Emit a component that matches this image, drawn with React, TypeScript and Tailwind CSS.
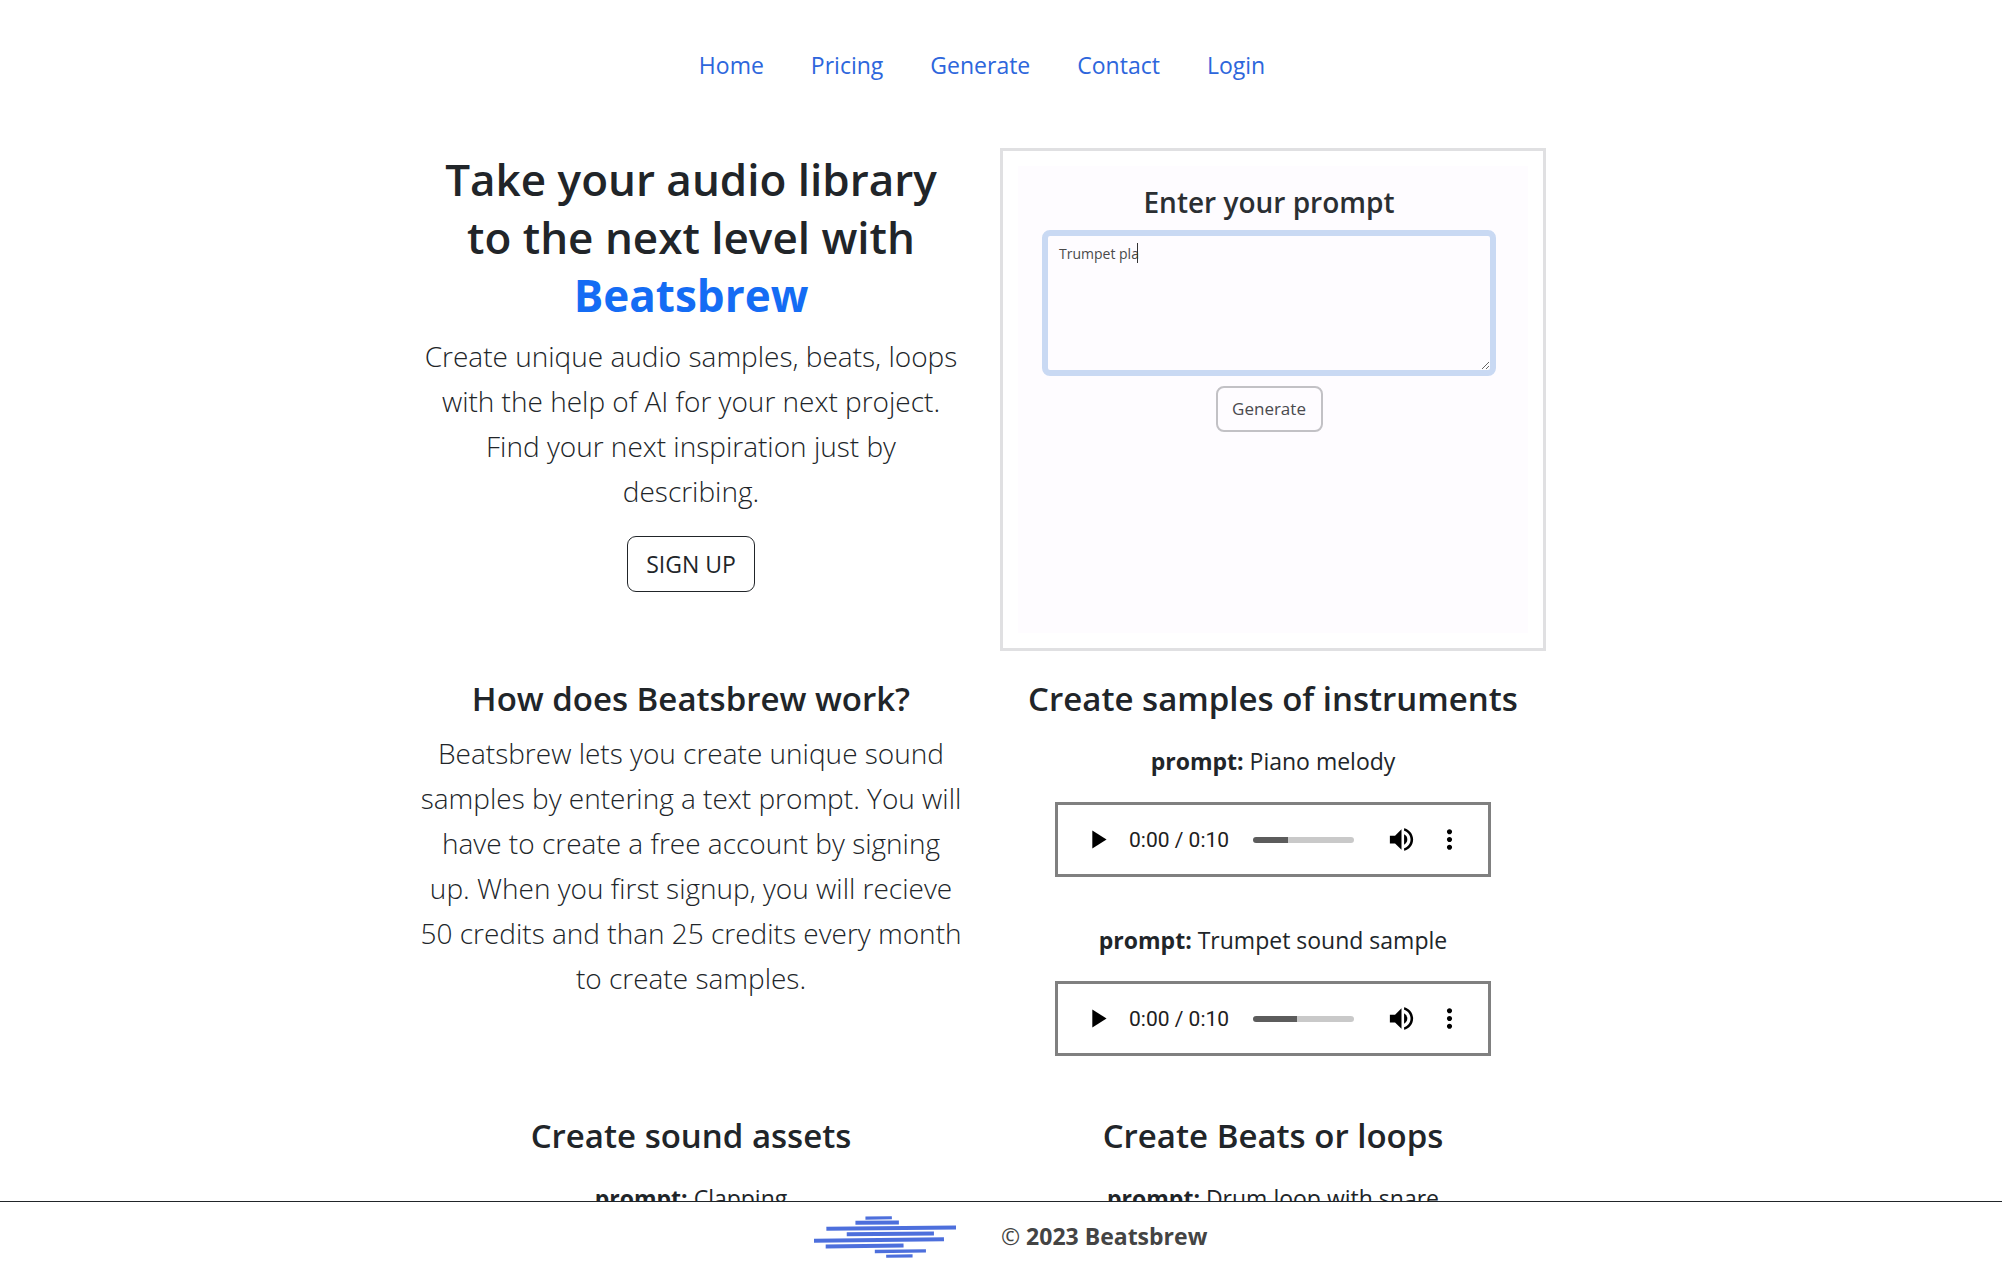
import type { CSSProperties, ReactNode } from "react"

const NAV_LINKS = ["Home", "Pricing", "Generate", "Contact", "Login"]

function Logo() {
  return (
    <svg
      viewBox="43 65 425 125"
      className="h-[42px] w-[142px]"
      stroke="#4d6fdc"
      strokeWidth="12"
      aria-label="Beatsbrew logo"
    >
      <path d="M197 71L276 70" strokeWidth="9" />
      <path d="M167 85L297 84" />
      <path d="M80 103L468 99" />
      <path d="M141 119L402 117" />
      <path d="M43 139L432 134" />
      <path d="M78 156L311 153" />
      <path d="M225 171L378 169" strokeWidth="10" />
      <path d="M259 185L338 184" strokeWidth="9" />
    </svg>
  )
}

function IconButton({ label, path }: { label: string; path: string }) {
  return (
    <button type="button" aria-label={label} className="shrink-0">
      <svg viewBox="0 0 24 24" className="size-[31px] fill-black">
        <path d={path} />
      </svg>
    </button>
  )
}

function AudioPlayer({ name, progress }: { name: string; progress: number }) {
  const track: CSSProperties = {
    background: `linear-gradient(to right, #5c5c5c ${progress}%, #c9c9c9 ${progress}%)`,
  }
  return (
    <div className="flex h-[75px] w-[436px] max-w-full items-center border-3 border-[#808080] pr-[23px] pl-6">
      <IconButton label={`Play ${name}`} path="M8 5v14l11-7z" />
      <span className="ml-4 w-[100px] font-[Roboto,sans-serif] text-[21px] leading-6 whitespace-nowrap text-[#202020]">
        0:00 / 0:10
      </span>
      <input
        type="range"
        aria-label={`Position in ${name}`}
        defaultValue={progress}
        style={track}
        className="ml-6 h-1.5 w-[101px] appearance-none rounded-full [&::-webkit-slider-thumb]:size-0 [&::-webkit-slider-thumb]:appearance-none"
      />
      <div className="ml-auto flex gap-[17px]">
        <IconButton
          label={`Mute ${name}`}
          path="M3 9v6h4l5 5V4L7 9H3zm13.5 3A4.5 4.5 0 0 0 14 7.97v8.05c1.48-.73 2.5-2.25 2.5-4.02zM14 3.23v2.06c2.89.86 5 3.54 5 6.71s-2.11 5.85-5 6.71v2.06c4.01-.91 7-4.49 7-8.77s-2.99-7.86-7-8.77z"
        />
        <IconButton
          label={`More options for ${name}`}
          path="M12 8c1.1 0 2-.9 2-2s-.9-2-2-2-2 .9-2 2 .9 2 2 2zm0 2c-1.1 0-2 .9-2 2s.9 2 2 2 2-.9 2-2-.9-2-2-2zm0 6c-1.1 0-2 .9-2 2s.9 2 2 2 2-.9 2-2-.9-2-2-2z"
        />
      </div>
    </div>
  )
}

function Sample({ name, progress }: { name: string; progress: number }) {
  return (
    <div className="flex w-full flex-col items-center gap-[23px]">
      <p className="text-[23px] leading-9">
        <strong>prompt:</strong> {name}
      </p>
      <AudioPlayer name={name} progress={progress} />
    </div>
  )
}

function Section({ title, children }: { title: string; children: ReactNode }) {
  return (
    <section className="flex flex-col items-center text-center">
      <h2 className="text-[33px] leading-[43px] font-semibold">{title}</h2>
      {children}
    </section>
  )
}

function PromptDemo() {
  return (
    <div className="flex h-[503px] flex-col border-3 border-[#e0e0e2] p-[15px]">
      <div className="flex flex-1 flex-col items-center bg-[#fefcff] pt-[18px] pr-8 pl-6">
        <label htmlFor="prompt" className="text-[28px] leading-9 font-semibold text-[#2b2f33]">
          Enter your prompt
        </label>
        <div className="relative mt-[10px] w-full">
          <textarea
            id="prompt"
            defaultValue="Trumpet pla"
            className="block h-[146px] w-full rounded-lg border-6 border-[#c9d9f3] bg-[#fefcff] px-[11px] py-[6px] text-[14px] leading-6 text-[#4a4a4a] outline-none"
          />
          <span className="absolute top-[13px] left-[95px] h-5 w-px bg-[#333]" />
        </div>
        <button
          type="button"
          className="mt-[10px] h-[46px] w-[107px] rounded-lg border-2 border-[#c2c1c5] text-[17px] text-[#4a4a4e]"
        >
          Generate
        </button>
      </div>
    </div>
  )
}

export default function App() {
  return (
    <div className="flex h-screen flex-col bg-white font-['Open_Sans',sans-serif] text-[#212529]">
      <main className="min-h-0 flex-1 overflow-y-auto pr-[38px] [scrollbar-width:none]">
        <nav className="flex justify-center gap-[47px] pt-[47px] text-[23px] leading-9 text-[#2d66dc]">
          {NAV_LINKS.map((link) => (
            <a key={link} href="#">
              {link}
            </a>
          ))}
        </nav>

        <div className="mx-auto mt-[65px] grid max-w-[1164px] grid-cols-2 gap-x-9 px-[18px]">
          <div className="flex flex-col items-center pt-0.5 text-center">
            <h1 className="text-[44px] leading-[58px] font-semibold">
              Take your audio library to the next level with{" "}
              <strong className="font-bold text-[#146cf4]">Beatsbrew</strong>
            </h1>
            <p className="mt-2.5 text-[28px] leading-[45px] font-light">
              Create unique audio samples, beats, loops with the help of AI for your next project.
              Find your next inspiration just by describing.
            </p>
            <button
              type="button"
              className="mt-[22px] h-14 w-32 rounded-[9px] border border-[#212529] text-[23px]"
            >
              SIGN UP
            </button>
          </div>
          <PromptDemo />
        </div>

        <div className="mx-auto mt-[26px] grid max-w-[1164px] grid-cols-2 gap-x-9 gap-y-[58px] px-[18px] pb-12">
          <Section title="How does Beatsbrew work?">
            <p className="mt-[11px] px-0.5 text-[28px] leading-[45px] font-light">
              Beatsbrew lets you create unique sound samples by entering a text prompt. You will
              have to create a free account by signing up. When you first signup, you will recieve
              50 credits and than 25 credits every month to create samples.
            </p>
          </Section>
          <Section title="Create samples of instruments">
            <div className="mt-[23px] flex w-full flex-col gap-[45px]">
              <Sample name="Piano melody" progress={35} />
              <Sample name="Trumpet sound sample" progress={44} />
            </div>
          </Section>
          <Section title="Create sound assets">
            <div className="mt-[23px] w-full">
              <Sample name="Clapping" progress={35} />
            </div>
          </Section>
          <Section title="Create Beats or loops">
            <div className="mt-[23px] w-full">
              <Sample name="Drum loop with snare" progress={35} />
            </div>
          </Section>
        </div>
      </main>

      <footer className="grid h-[66px] shrink-0 grid-cols-2 items-center border-t border-[#212529] bg-white pt-1">
        <div className="flex justify-end pr-[45px]">
          <Logo />
        </div>
        <p className="text-[23px] font-bold text-[#444]">
          <span className="font-normal">©</span> 2023 Beatsbrew
        </p>
      </footer>
    </div>
  )
}
